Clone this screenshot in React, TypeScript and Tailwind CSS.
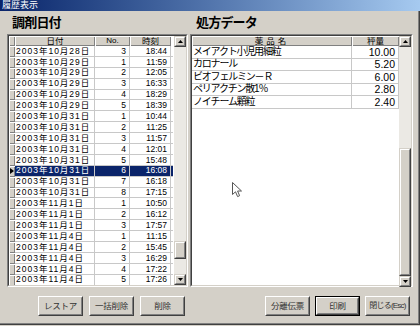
import React from "react";

type HistoryRow = { date: string; no: number; time: string };

const historyRows: HistoryRow[] = [
  { date: "2003年10月28日", no: 3, time: "18:44" },
  { date: "2003年10月29日", no: 1, time: "11:59" },
  { date: "2003年10月29日", no: 2, time: "12:05" },
  { date: "2003年10月29日", no: 3, time: "16:33" },
  { date: "2003年10月29日", no: 4, time: "18:29" },
  { date: "2003年10月29日", no: 5, time: "18:39" },
  { date: "2003年10月31日", no: 1, time: "10:44" },
  { date: "2003年10月31日", no: 2, time: "11:25" },
  { date: "2003年10月31日", no: 3, time: "11:57" },
  { date: "2003年10月31日", no: 4, time: "12:01" },
  { date: "2003年10月31日", no: 5, time: "15:48" },
  { date: "2003年10月31日", no: 6, time: "16:08" },
  { date: "2003年10月31日", no: 7, time: "16:18" },
  { date: "2003年10月31日", no: 8, time: "17:15" },
  { date: "2003年11月1日", no: 1, time: "10:50" },
  { date: "2003年11月1日", no: 2, time: "16:12" },
  { date: "2003年11月1日", no: 3, time: "17:57" },
  { date: "2003年11月4日", no: 1, time: "11:15" },
  { date: "2003年11月4日", no: 2, time: "15:45" },
  { date: "2003年11月4日", no: 3, time: "16:29" },
  { date: "2003年11月4日", no: 4, time: "17:22" },
  { date: "2003年11月4日", no: 5, time: "17:26" },
];

const SELECTED = 11;

const drugs = [
  { name: "メイアクト小児用細粒", amount: "10.00" },
  { name: "カロナール", amount: "5.20" },
  { name: "ビオフェルミン－Ｒ", amount: "6.00" },
  { name: "ペリアクチン散1％", amount: "2.80" },
  { name: "ノイチーム顆粒", amount: "2.40" },
];

const raised =
  "bg-[#d4d0c8] shadow-[inset_1px_1px_#ffffff,inset_-1px_-1px_#808080]";

// 3D sunken frame like a classic grid control
const Sunken: React.FC<{ className?: string; children: React.ReactNode }> = ({
  className = "",
  children,
}) => (
  <div
    className={`border border-t-[#808080] border-l-[#808080] border-r-white border-b-white ${className}`}
  >
    <div className="h-full w-full border border-t-[#404040] border-l-[#404040] border-r-[#d4d0c8] border-b-[#d4d0c8]">
      {children}
    </div>
  </div>
);

const ArrowButton: React.FC<{ down?: boolean }> = ({ down }) => (
  <div className="h-[11px] shrink-0 border border-t-[#d4d0c8] border-l-[#d4d0c8] border-r-[#404040] border-b-[#404040]">
    <div className="h-full w-full bg-[#d4d0c8] border border-t-white border-l-white border-r-[#808080] border-b-[#808080] flex items-center justify-center">
      <svg width="5" height="3" viewBox="0 0 5 3">
        {down ? (
          <path d="M0 0 H5 L2.5 3 Z" fill="#000" />
        ) : (
          <path d="M0 3 H5 L2.5 0 Z" fill="#000" />
        )}
      </svg>
    </div>
  </div>
);

const ScrollBar: React.FC<{ before: number; thumb: number }> = ({
  before,
  thumb,
}) => (
  <div className="w-[12px] h-full flex flex-col bg-[#ebe9e4]">
    <ArrowButton />
    <div className="flex-1 flex flex-col">
      <div style={{ height: before }} />
      <div
        style={{ height: thumb }}
        className="border border-t-[#d4d0c8] border-l-[#d4d0c8] border-r-[#404040] border-b-[#404040]"
      >
        <div className="h-full w-full bg-[#d4d0c8] border border-t-white border-l-white border-r-[#808080] border-b-[#808080]" />
      </div>
    </div>
    <ArrowButton down />
  </div>
);

const Button: React.FC<{ label: string; focused?: boolean; tight?: boolean }> = ({
  label,
  focused,
  tight,
}) => (
  <div
    className={`w-[45px] h-[20px] ${focused ? "border border-black" : ""}`}
  >
    <div className="h-full w-full border border-t-white border-l-white border-r-[#404040] border-b-[#404040]">
      <div
        className={`h-full w-full bg-[#d4d0c8] border border-transparent border-r-[#808080] border-b-[#808080] flex items-center justify-center text-[#333] whitespace-nowrap ${
          tight ? "text-[8px] tracking-[-0.8px]" : "text-[8.5px] tracking-[-0.3px]"
        }`}
      >
        {label}
      </div>
    </div>
  </div>
);

const App: React.FC = () => {
  return (
    <div
      className="w-[420px] h-[326px] bg-[#d4d0c8] relative overflow-hidden text-black"
      style={{ fontFamily: '"Liberation Sans", "Noto Sans CJK JP", sans-serif' }}
    >
      <div className="w-[420px] h-[325px] flex flex-col shadow-[inset_-1px_-1px_#404040,inset_-2px_-2px_#808080]">
        {/* title bar */}
        <div className="h-[11px] bg-linear-to-r from-[#0a246a] to-[#a6caf0] flex items-center pl-[2px] text-[9px] leading-none text-white">
          履歴表示
        </div>

        <div className="flex pl-[7px] gap-[2px]">
          {/* 調剤日付 */}
          <div className="w-[181px] flex flex-col">
            <div className="h-[23px] pl-[5px] pt-[5px] text-[13px] font-bold leading-none tracking-[-0.8px]">
              調剤日付
            </div>
            <Sunken className="h-[253px]">
              <div className="flex h-full bg-white">
                <div className="flex-1 flex flex-col text-[8.5px] leading-none overflow-hidden">
                  <div className="flex h-[10px] shrink-0">
                    <div className={`w-[6px] ${raised}`} />
                    <div className={`w-[80px] ${raised} flex items-center justify-center`}>
                      日付
                    </div>
                    <div className={`w-[35px] ${raised} flex items-center justify-center text-[8px]`}>
                      No.
                    </div>
                    <div className={`w-[41px] ${raised} flex items-center justify-center`}>
                      時刻
                    </div>
                  </div>
                  {historyRows.map((r, i) => {
                    const sel = i === SELECTED;
                    return (
                      <div key={i} className="flex h-[10.9px] shrink-0">
                        <div className={`w-[6px] ${raised} flex items-center justify-center`}>
                          {sel && (
                            <svg width="4" height="6" viewBox="0 0 4 6">
                              <path d="M0 0 L4 3 L0 6 Z" fill="#000" />
                            </svg>
                          )}
                        </div>
                        <div
                          className={`flex w-[158px] border-b border-[#c8c8c8] ${
                            sel ? "bg-[#0a246a] text-white" : ""
                          }`}
                        >
                          <div className="w-[80px] border-r border-[#c8c8c8] flex items-center pl-[1px] tracking-[1px] whitespace-nowrap">
                            {r.date}
                          </div>
                          <div className="w-[35px] border-r border-[#c8c8c8] flex items-center justify-end pr-[3px]">
                            {r.no}
                          </div>
                          <div className="w-[41px] border-r border-[#c8c8c8] flex items-center justify-end pr-[3px]">
                            {r.time}
                          </div>
                        </div>
                      </div>
                    );
                  })}
                </div>
                <ScrollBar before={194} thumb={18} />
              </div>
            </Sunken>
          </div>

          {/* 処方データ */}
          <div className="w-[223px] flex flex-col">
            <div className="h-[23px] pl-[6px] pt-[5px] text-[13px] font-bold leading-none tracking-[-0.8px]">
              処方データ
            </div>
            <Sunken className="h-[253px]">
              <div className="flex h-full bg-white">
                <div className="flex-1 flex flex-col overflow-hidden">
                  <div className="flex h-[10px] shrink-0 text-[8.5px] leading-none">
                    <div className={`w-[160px] ${raised} flex items-center justify-center tracking-[3px]`}>
                      薬品名
                    </div>
                    <div className={`w-[47px] ${raised} flex items-center justify-center`}>
                      秤量
                    </div>
                  </div>
                  {drugs.map((d, i) => (
                    <div key={i} className="flex w-[207px] h-[12.5px] shrink-0 border-b border-[#c8c8c8] text-[10px] leading-none">
                      <div className="w-[160px] border-r border-[#c8c8c8] flex items-center pl-[1px] tracking-[-1.2px] whitespace-nowrap">
                        {d.name}
                      </div>
                      <div className="w-[47px] border-r border-[#c8c8c8] flex items-center justify-end pr-[3px] text-[10.5px]">
                        {d.amount}
                      </div>
                    </div>
                  ))}
                </div>
                <ScrollBar before={101} thumb={128} />
              </div>
            </Sunken>
          </div>
        </div>

        {/* buttons */}
        <div className="flex mt-[9px]">
          <div className="flex gap-[6px] pl-[38px]">
            <Button label="レストア" />
            <Button label="一括削除" />
            <Button label="削除" />
          </div>
          <div className="flex gap-[5px] ml-[80px]">
            <Button label="分離伝票" />
            <Button label="印刷" focused />
            <Button label="閉じる(Esc)" tight />
          </div>
        </div>
      </div>

      {/* mouse cursor */}
      <svg
        className="absolute left-[232px] top-[182px]"
        width="11"
        height="17"
        viewBox="0 0 11 17"
      >
        <path
          d="M0.5 0.5 L0.5 12.5 L3.5 9.8 L5.6 14.6 L7.6 13.7 L5.6 9 L9.5 9 Z"
          fill="#fff"
          stroke="#555"
          strokeWidth="1"
        />
      </svg>
    </div>
  );
};

export default App;
